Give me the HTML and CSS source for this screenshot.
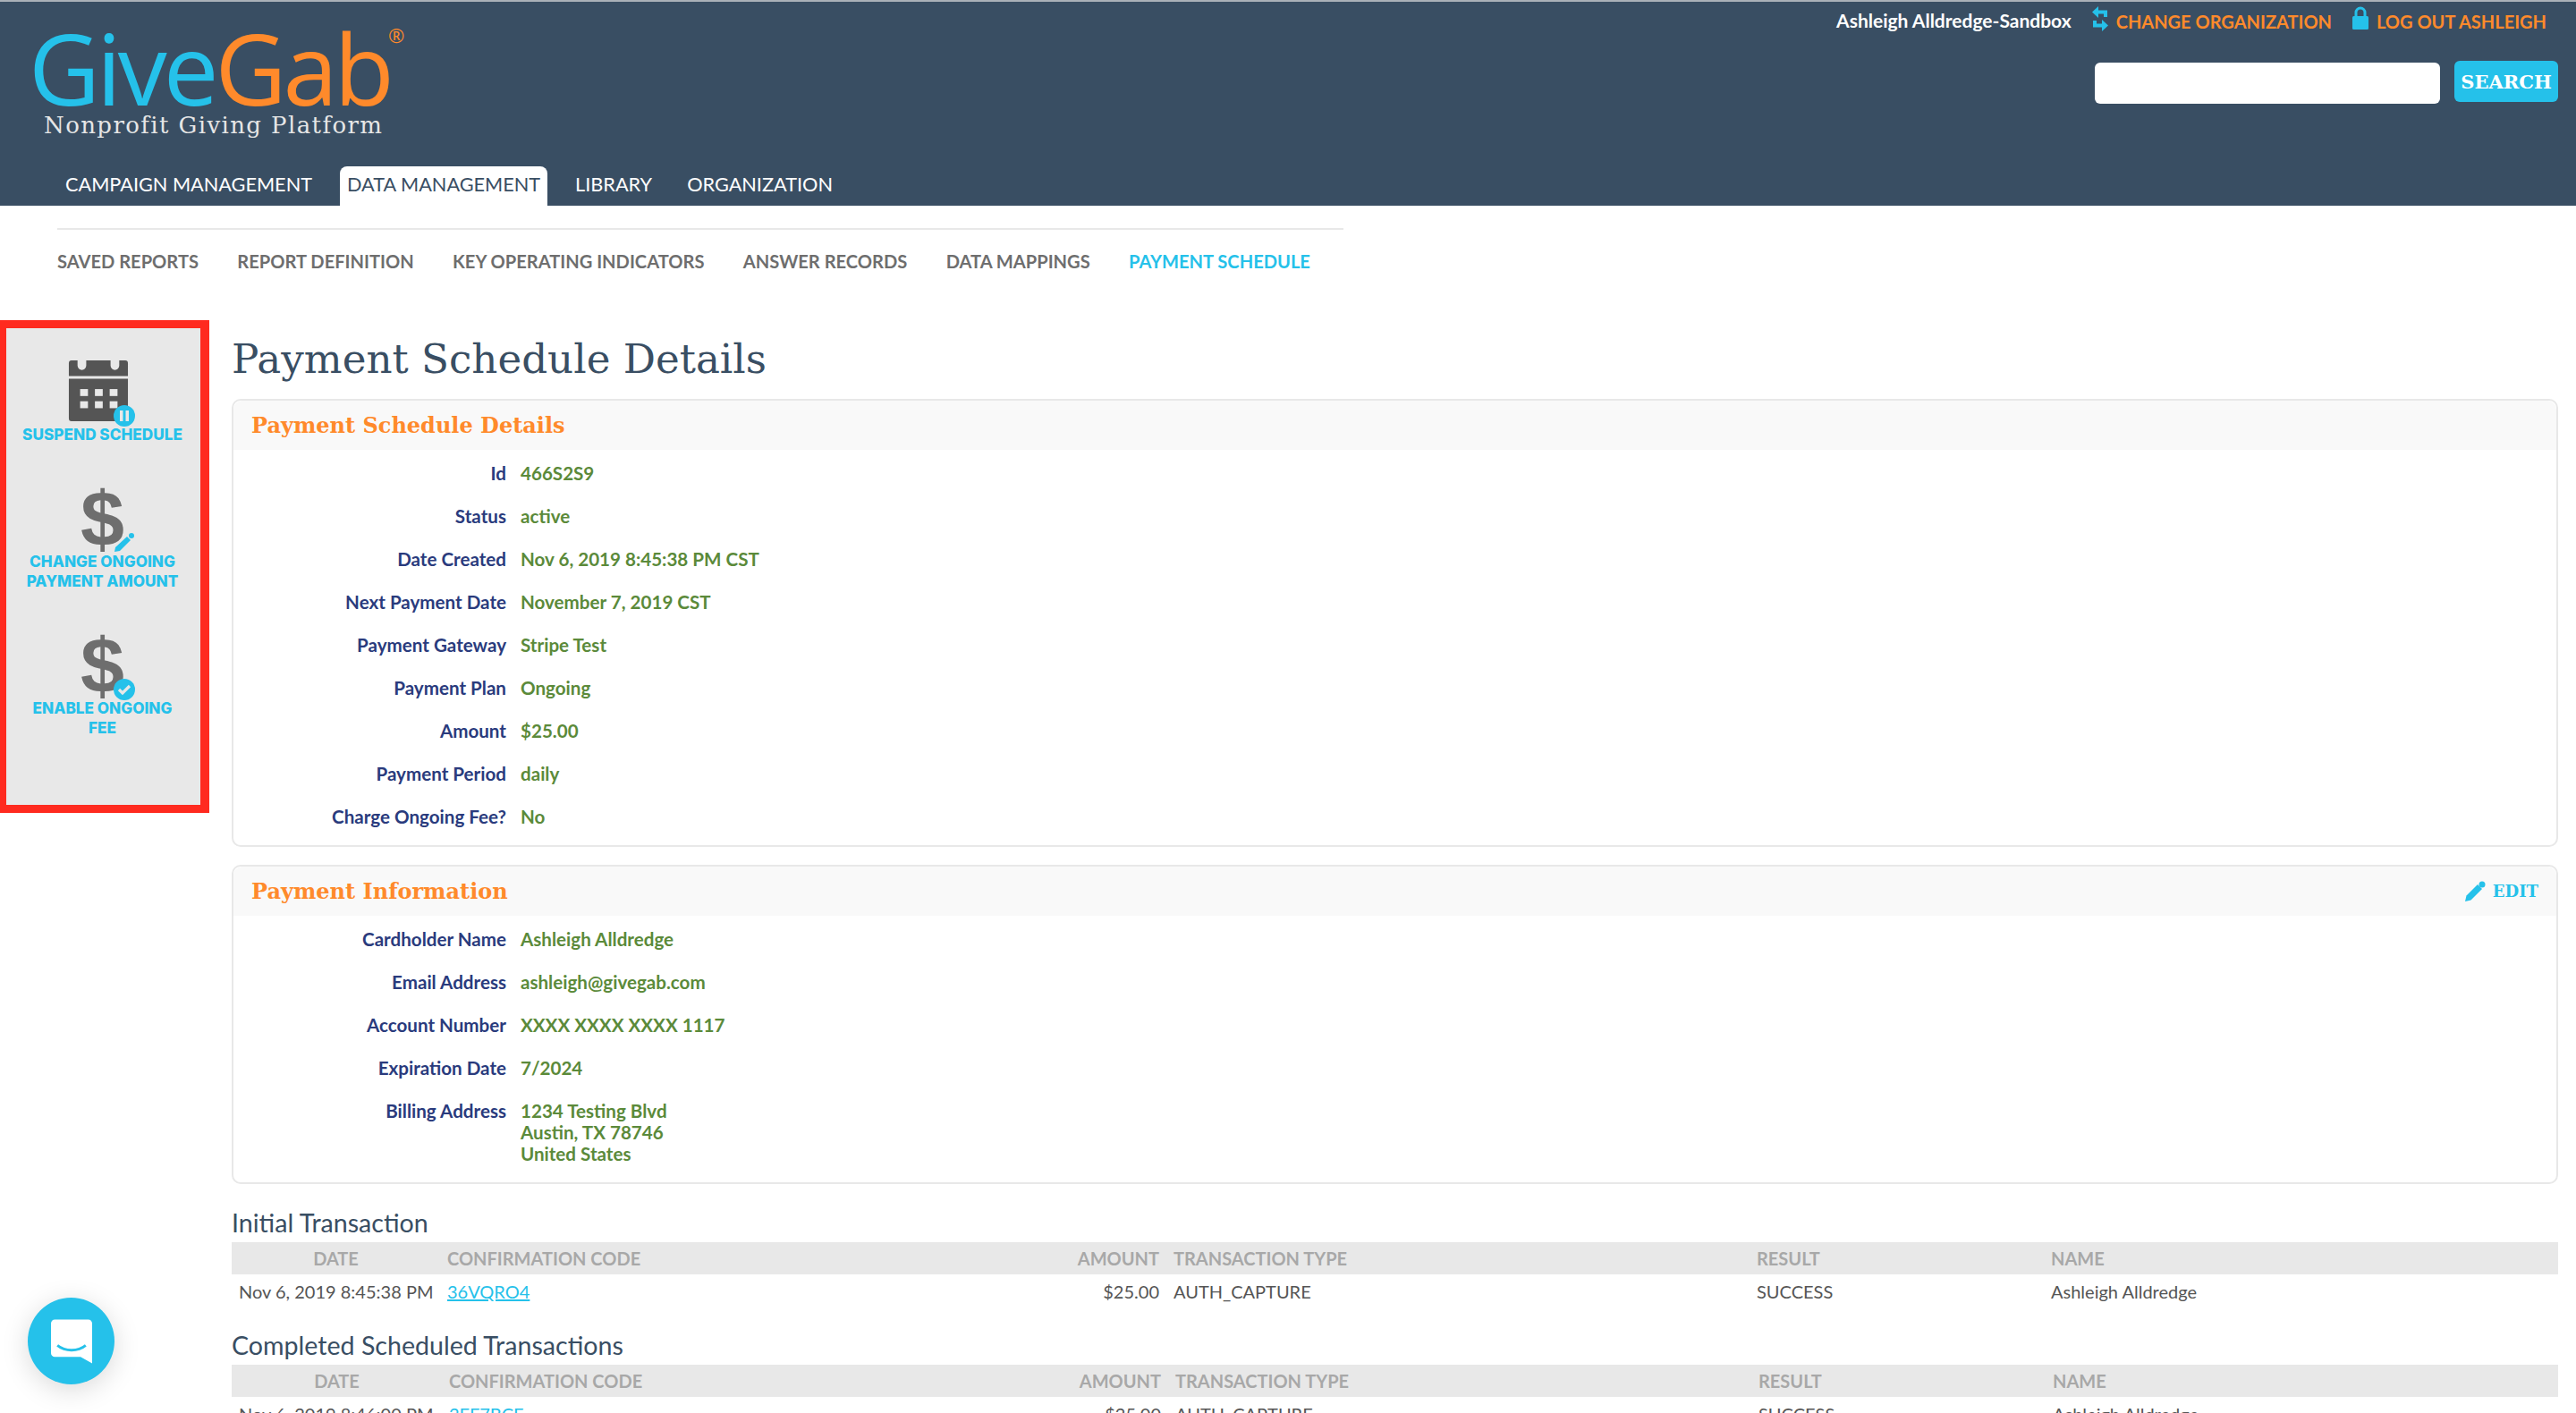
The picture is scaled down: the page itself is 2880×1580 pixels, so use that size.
FILE: index.html
```html
<!DOCTYPE html>
<html lang="en">
<head>
  <meta charset="UTF-8" />
  <title>Payment Schedule Details</title>
  <link rel="stylesheet" href="styles.css">
</head>
<body>

  <header class="site-header">
    <div class="header-top">
      <div class="logo">
        <div class="logo-name"><span class="logo-give">Give</span><span class="logo-gab">Gab</span><span class="logo-reg">®</span></div>
        <div class="logo-tag">Nonprofit Giving Platform</div>
      </div>
      <div class="header-right">
        <div class="user-links">
          <span class="user-name">Ashleigh Alldredge-Sandbox</span>
          <a class="user-link">
            <svg class="link-icon" viewBox="0 0 20 28"><path d="M16 12V6.500H7" fill="none" stroke="#25c1ea" stroke-width="4"/><path d="M8 0v13L1 6.500z" fill="#25c1ea"/><path d="M4 16v5.500h9" fill="none" stroke="#25c1ea" stroke-width="4"/><path d="M12 15v13l7-6.500z" fill="#25c1ea"/></svg>
            CHANGE ORGANIZATION
          </a>
          <a class="user-link">
            <svg class="link-icon" viewBox="0 0 20 28"><path d="M5 12V7a5 5 0 0 1 10 0v5" fill="none" stroke="#25c1ea" stroke-width="3"/><rect x="1" y="11" width="18" height="15" rx="1.5" fill="#25c1ea"/></svg>
            LOG OUT ASHLEIGH
          </a>
        </div>
        <form class="search-form">
          <input class="search-input" type="text" />
          <button class="search-button" type="button">SEARCH</button>
        </form>
      </div>
    </div>
    <nav class="main-nav">
      <a>CAMPAIGN MANAGEMENT</a>
      <a class="active">DATA MANAGEMENT</a>
      <a>LIBRARY</a>
      <a>ORGANIZATION</a>
    </nav>
  </header>

  <nav class="sub-nav">
    <a>SAVED REPORTS</a>
    <a>REPORT DEFINITION</a>
    <a>KEY OPERATING INDICATORS</a>
    <a>ANSWER RECORDS</a>
    <a>DATA MAPPINGS</a>
    <a class="active">PAYMENT SCHEDULE</a>
  </nav>

  <div class="page">
    <aside class="sidebar">
      <a class="side-action">
        <span class="side-icon">
          <svg class="calendar" viewBox="0 0 68 70">
            <path d="M3 0h7v6a5 5 0 0 0 10 0V0h28v6a5 5 0 0 0 10 0V0h7a3 3 0 0 1 3 3v15H0V3a3 3 0 0 1 3-3z" fill="#555"/>
            <path d="M0 21h68v46a3 3 0 0 1-3 3H3a3 3 0 0 1-3-3z" fill="#555"/>
            <g fill="#e8e8e8">
              <rect x="13" y="33" width="9" height="8"/><rect x="30" y="33" width="9" height="8"/><rect x="47" y="33" width="9" height="8"/>
              <rect x="13" y="47" width="9" height="8"/><rect x="30" y="47" width="9" height="8"/><rect x="47" y="47" width="9" height="8"/>
            </g>
          </svg>
          <svg class="badge" viewBox="0 0 24 24"><circle cx="12" cy="12" r="12" fill="#25c1ea"/><rect x="7" y="6" width="3.500" height="12" fill="#e8e8e8"/><rect x="13.500" y="6" width="3.500" height="12" fill="#e8e8e8"/></svg>
        </span>
        SUSPEND SCHEDULE
      </a>
      <a class="side-action">
        <span class="side-icon">
          <span class="dollar">$</span>
          <svg class="badge" viewBox="0 0 24 24"><path d="M1 22l1-5L15 5l4 4L7 21z" fill="#25c1ea"/><circle cx="20" cy="4" r="3" fill="#25c1ea"/></svg>
        </span>
        CHANGE ONGOING PAYMENT AMOUNT
      </a>
      <a class="side-action">
        <span class="side-icon">
          <span class="dollar">$</span>
          <svg class="badge" viewBox="0 0 24 24"><circle cx="12" cy="12" r="12" fill="#25c1ea"/><path d="M6 12l4 4 8-8" fill="none" stroke="#e8e8e8" stroke-width="3.200"/></svg>
        </span>
        ENABLE ONGOING FEE
      </a>
    </aside>

    <main class="content">
      <h1 class="page-title">Payment Schedule Details</h1>

      <section class="panel">
        <div class="panel-header"><h2>Payment Schedule Details</h2></div>
        <dl class="fields">
          <dt>Id</dt><dd>466S2S9</dd>
          <dt>Status</dt><dd>active</dd>
          <dt>Date Created</dt><dd>Nov 6, 2019 8:45:38 PM CST</dd>
          <dt>Next Payment Date</dt><dd>November 7, 2019 CST</dd>
          <dt>Payment Gateway</dt><dd>Stripe Test</dd>
          <dt>Payment Plan</dt><dd>Ongoing</dd>
          <dt>Amount</dt><dd>$25.00</dd>
          <dt>Payment Period</dt><dd>daily</dd>
          <dt>Charge Ongoing Fee?</dt><dd>No</dd>
        </dl>
      </section>

      <section class="panel">
        <div class="panel-header">
          <h2>Payment Information</h2>
          <a class="edit-link">
            <svg class="edit-icon" viewBox="0 0 24 24"><path d="M1 23l1.500-6.500L15 4l5 5L7.500 21.500z" fill="#25c1ea"/><circle cx="20" cy="4" r="3.500" fill="#25c1ea"/></svg>
            EDIT
          </a>
        </div>
        <dl class="fields">
          <dt>Cardholder Name</dt><dd>Ashleigh Alldredge</dd>
          <dt>Email Address</dt><dd>ashleigh@givegab.com</dd>
          <dt>Account Number</dt><dd>XXXX XXXX XXXX 1117</dd>
          <dt>Expiration Date</dt><dd>7/2024</dd>
          <dt>Billing Address</dt><dd>1234 Testing Blvd<br>Austin, TX 78746<br>United States</dd>
        </dl>
      </section>

      <h3 class="table-title">Initial Transaction</h3>
      <table class="tx-table">
        <thead>
          <tr><th class="col-date">DATE</th><th class="col-code">CONFIRMATION CODE</th><th class="col-amount">AMOUNT</th><th class="col-type">TRANSACTION TYPE</th><th class="col-result">RESULT</th><th>NAME</th></tr>
        </thead>
        <tbody>
          <tr><td class="col-date">Nov 6, 2019 8:45:38 PM</td><td class="col-code"><a>36VQRO4</a></td><td class="col-amount">$25.00</td><td class="col-type">AUTH_CAPTURE</td><td class="col-result">SUCCESS</td><td>Ashleigh Alldredge</td></tr>
        </tbody>
      </table>

      <h3 class="table-title table-title-next">Completed Scheduled Transactions</h3>
      <table class="tx-table tx-table-wide">
        <thead>
          <tr><th class="col-date">DATE</th><th class="col-code">CONFIRMATION CODE</th><th class="col-amount">AMOUNT</th><th class="col-type">TRANSACTION TYPE</th><th class="col-result">RESULT</th><th>NAME</th></tr>
        </thead>
        <tbody>
          <tr><td class="col-date">Nov 6, 2019 8:46:00 PM</td><td class="col-code"><a>2FF7BCF</a></td><td class="col-amount">$25.00</td><td class="col-type">AUTH_CAPTURE</td><td class="col-result">SUCCESS</td><td>Ashleigh Alldredge</td></tr>
        </tbody>
      </table>
    </main>
  </div>

  <!-- Chat launcher -->
  <div class="chat-launcher">
    <svg viewBox="0 0 32 34"><path d="M3 0h26a3 3 0 0 1 3 3v31l-9-5H3a3 3 0 0 1-3-3V3a3 3 0 0 1 3-3z" fill="#fff"/><path d="M5 20c6 5 16 5 22 0" fill="none" stroke="#25c1ea" stroke-width="2"/></svg>
  </div>

</body>
</html>
```

FILE: styles.css
```css
* {
  box-sizing: border-box;
  margin: 0;
  padding: 0;
}

html, body {
  height: 1580px;
  overflow: hidden;
}

body {
  font-family: Lato, "Open Sans", sans-serif;
  background-color: #fff;
  color: #555;
  position: relative;
}

/* Header */
.site-header {
  height: 230px;
  background-color: #394e63;
  border-top: 2px solid #aab1b8;
  display: flex;
  flex-direction: column;
  justify-content: space-between;
}

.header-top {
  display: flex;
  justify-content: space-between;
  padding: 0 20px 0 32px;
}

.logo {
  padding-top: 21px;
}

.logo-name {
  font-family: "Open Sans", sans-serif;
  font-size: 110px;
  font-weight: 500;
  line-height: 104px;
  letter-spacing: -4px;
  display: flex;
  align-items: flex-start;
}

.logo-give {
  color: #25c1ea;
}

.logo-gab {
  color: #ff8a2b;
}

.logo-reg {
  color: #ff8a2b;
  font-size: 22px;
  line-height: 30px;
  letter-spacing: 0;
  margin-left: -3px;
  margin-top: 1px;
}

.logo-tag {
  font-family: "DejaVu Serif", serif;
  font-size: 26px;
  letter-spacing: 1.4px;
  color: #e6e6e6;
  margin: -2px 0 0 17px;
  white-space: nowrap;
}

.header-right {
  display: flex;
  flex-direction: column;
  align-items: flex-end;
}

.user-links {
  display: flex;
  align-items: center;
  padding-top: 10px;
  margin-right: 13px;
  font-size: 20px;
  font-weight: 700;
}

.user-name {
  color: #fff;
  font-size: 21px;
  margin-top: -4px;
}

.user-link {
  color: #ff8a2b;
  display: flex;
  align-items: center;
  gap: 8px;
  margin-left: 22px;
}

.link-icon {
  width: 20px;
  height: 28px;
  margin-top: -6px;
}

.search-form {
  display: flex;
  gap: 16px;
  margin-top: 32px;
}

.search-input {
  width: 386px;
  height: 46px;
  margin-top: 2px;
  border: 0;
  border-radius: 6px;
  background: #fff;
}

.search-button {
  width: 116px;
  height: 46px;
  border: 0;
  border-radius: 6px;
  background-color: #25c1ea;
  color: #fff;
  font-family: "DejaVu Serif", serif;
  font-size: 21px;
  font-weight: 700;
}

.main-nav {
  display: flex;
  align-items: flex-end;
  padding-left: 65px;
  gap: 23px;
}

.main-nav a {
  height: 44px;
  line-height: 40px;
  padding: 0 8px;
  font-size: 21.7px;
  color: #fff;
  border-radius: 8px 8px 0 0;
  white-space: nowrap;
}

.main-nav a.active {
  background-color: #fff;
  color: #394e63;
}

/* Sub navigation */
.sub-nav {
  margin: 25px 0 0 64px;
  width: 1438px;
  height: 72px;
  border-top: 2px solid #e8e8e8;
  display: flex;
  align-items: center;
  gap: 43.4px;
  font-size: 20.1px;
  font-weight: 700;
  color: #6e6e6e;
}

.sub-nav a.active {
  color: #25c1ea;
}

/* Page */
.page {
  display: flex;
  align-items: flex-start;
  padding-right: 20px;
}

.sidebar {
  width: 234px;
  height: 551px;
  margin-top: 31px;
  flex-shrink: 0;
  background-color: #e8e8e8;
  border: 9px solid #ff2a1f;
  border-left-width: 7px;
  border-right-width: 10px;
  padding-top: 34px;
  display: flex;
  flex-direction: column;
  gap: 48px;
}

.side-action {
  display: block;
  text-align: center;
  color: #25c1ea;
  font-family: Inter, sans-serif;
  font-size: 17.2px;
  font-weight: 800;
  line-height: 22px;
  padding: 0 17px 0 15px;
}

.side-icon {
  display: block;
  width: 84px;
  height: 72px;
  margin: 0 auto;
  position: relative;
}

.calendar {
  display: block;
  width: 68px;
  height: 68px;
  margin: 2px 0 0 3px;
}

.dollar {
  display: block;
  font-family: "Liberation Sans", sans-serif;
  font-weight: 700;
  font-size: 88px;
  line-height: 72px;
  color: #6e6e6e;
}

.badge {
  width: 24px;
  height: 24px;
  position: absolute;
  right: 6px;
  bottom: -2px;
}

.content {
  flex: 1;
  margin-left: 25px;
  padding-top: 45px;
}

.page-title {
  font-family: "DejaVu Serif", serif;
  font-weight: 400;
  font-size: 45.2px;
  line-height: 60px;
  color: #394e63;
  margin-bottom: 14px;
}

.panel {
  border: 2px solid #e8e8e8;
  border-radius: 10px;
  margin-bottom: 20px;
}

.panel-header {
  height: 55px;
  background-color: #f9f9f9;
  border-radius: 10px 10px 0 0;
  display: flex;
  align-items: center;
  justify-content: space-between;
  padding: 0 20px;
}

.panel-header h2 {
  font-family: "DejaVu Serif", serif;
  font-size: 24px;
  font-weight: 700;
  color: #ff8a2b;
}

.edit-link {
  display: flex;
  align-items: center;
  gap: 8px;
  font-family: "DejaVu Serif", serif;
  font-size: 18px;
  font-weight: 700;
  color: #25c1ea;
}

.edit-icon {
  width: 24px;
  height: 24px;
}

.fields {
  display: grid;
  grid-template-columns: 305px 1fr;
  column-gap: 16px;
  row-gap: 24px;
  padding: 14px 0 20px;
  font-size: 20.6px;
  font-weight: 700;
  line-height: 24px;
}

.fields dt {
  text-align: right;
  color: #2a3b7d;
}

.fields dd {
  color: #5b8a3a;
}

.table-title {
  font-size: 28.6px;
  font-weight: 400;
  line-height: 34px;
  color: #394e63;
  margin-top: 26px;
}

.table-title-next {
  margin-top: 24px;
}

.tx-table {
  width: 100%;
  table-layout: fixed;
  border-collapse: collapse;
  margin-top: 5px;
  font-size: 20px;
}

.tx-table th {
  height: 36px;
  background-color: #e8e8e8;
  color: #a8a8a8;
  font-weight: 700;
  text-align: left;
  padding: 0 8px;
  white-space: nowrap;
}

.tx-table td {
  height: 38px;
  padding: 0 8px;
  white-space: nowrap;
}

.tx-table a {
  color: #25c1ea;
  text-decoration: underline;
}

.col-date {
  width: 233px;
}

.tx-table th.col-date {
  text-align: center;
}

.col-code {
  width: 700px;
}

.col-amount {
  width: 112px;
}

.tx-table .col-amount {
  text-align: right;
}

.col-type {
  width: 652px;
}

.col-result {
  width: 329px;
}

.tx-table-wide .col-date {
  width: 235px;
}

/* Chat launcher */
.chat-launcher {
  position: absolute;
  left: 31px;
  top: 1451px;
  width: 97px;
  height: 97px;
  border-radius: 50%;
  background-color: #25c1ea;
  box-shadow: 0 6px 30px rgba(0, 0, 0, 0.15);
  display: flex;
  align-items: center;
  justify-content: center;
}

.chat-launcher svg {
  width: 46px;
  height: 52px;
}
```
